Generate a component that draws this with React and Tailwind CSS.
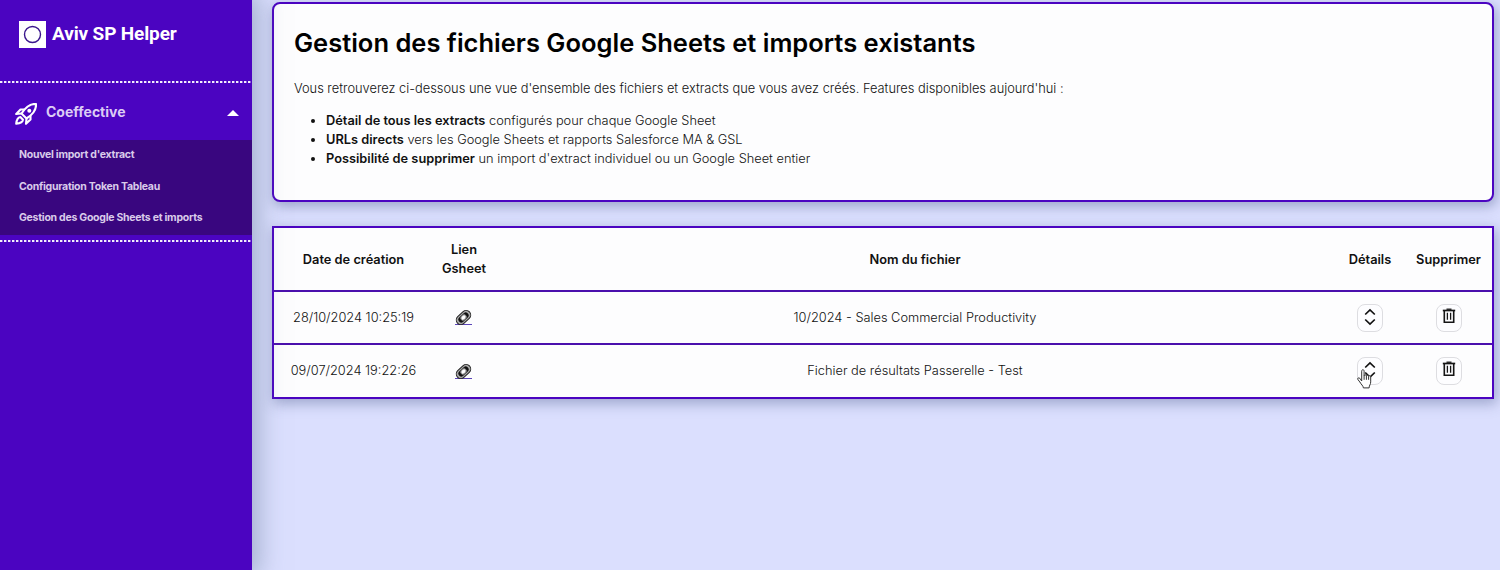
import React from "react";

const menu = ["Nouvel import d'extract", "Configuration Token Tableau", "Gestion des Google Sheets et imports"];

const rows = [
  { date: "28/10/2024 10:25:19", name: "10/2024 - Sales Commercial Productivity" },
  { date: "09/07/2024 19:22:26", name: "Fichier de résultats Passerelle - Test", hovered: true },
];

function DottedLine() {
  return (
    <svg className="block h-[2px] w-full shrink-0" aria-hidden="true">
      <line x1="0" y1="1" x2="252" y2="1" stroke="#f4effc" strokeWidth="2" strokeDasharray="2.4 1.6" />
    </svg>
  );
}

function RocketIcon() {
  return (
    <svg viewBox="0 0 22 22" className="ml-[2px] mt-[4px] h-[22px] w-[22px]" fill="none" stroke="#fff" strokeWidth="2.1" strokeLinejoin="round">
      <path d="M21 1C15 .5 11 3.500 6.500 10.500l5 5C18.500 11 21.500 7 21 1Z" />
      <path d="M9.200 6.500H5.500L1.200 11l5.300-.5M15.500 12.800v3.700L11 20.800l.5-5.300" />
      <path d="M5.300 14C2.300 14.400 1.600 17 1.200 20.800 5 20.400 7.600 19.700 8 16.700Z" />
      <circle cx="14.300" cy="7.700" r="2" fill="#fff" stroke="none" />
    </svg>
  );
}

function LinkIcon() {
  return (
    <a className="mr-[1px] mt-[-1px] inline-flex h-[16px] w-[17px] border-b border-[#5b45b8]">
      <svg viewBox="0 0 17 17" className="h-[17px] w-[17px] shrink-0" fill="none">
        <g transform="rotate(-43 8.5 8.5)">
          <rect x="0.3" y="4" width="16.4" height="9" rx="4.500" fill="#aaa" stroke="#222" strokeWidth="1" />
          <rect x="2.800" y="5.800" width="11.400" height="5.400" rx="2.700" fill="#111" stroke="#111" strokeWidth="0.500" />
          <ellipse cx="8.500" cy="8.500" rx="2.900" ry="2.200" fill="#fff" stroke="#888" strokeWidth="1" />
        </g>
      </svg>
    </a>
  );
}

function ChevronsIcon() {
  return (
    <svg viewBox="0 0 12 18" className="h-[18px] w-[12px]" fill="none" stroke="#111" strokeWidth="1.7">
      <path d="M1.200 6.500 6 2l4.800 4.500M1.200 11.500 6 16l4.800-4.500" />
    </svg>
  );
}

function TrashIcon() {
  return (
    <svg viewBox="0 0 14 16" className="h-[16px] w-[14px]" fill="none" stroke="#151515">
      <path d="M0.800 2.500h12.400" strokeWidth="1.700" />
      <path d="M4.500 1.200h5" strokeWidth="1.300" />
      <path d="M2.300 2.800v11.400h9.400V2.800" strokeWidth="1.600" />
      <path d="M5.400 4.800v7M8.600 4.800v7" strokeWidth="1.300" />
    </svg>
  );
}

function HandCursor() {
  return (
    <svg viewBox="0 0 16 20" className="absolute left-[-1px] top-[11px] h-[20px] w-[16px]" fill="#fff" stroke="#333" strokeWidth="1" strokeLinejoin="round">
      <path d="M4.700 12V2.200c0-2 2.400-2 2.400 0v4.600c.2-1.500 2.200-1.300 2.300.2.300-1.200 2.100-1 2.200.4.400-1 2.100-.7 2.100.7v4.800c0 2.700-1.500 3.200-1.600 6H6.400c-.2-2.200-2.200-3.300-3.600-6L1 10.700c-1-1.600.8-2.500 1.800-1.400z" />
      <path d="M7.100 6.800v4M9.400 7v3.800M11.600 7.400v3.400" />
    </svg>
  );
}

function IconButton({ children }) {
  return (
    <button className="relative flex h-[28px] w-[26px] justify-center rounded-[8px] border border-[#dddde1] bg-[#fdfdff]">
      {children}
    </button>
  );
}

const grid = "grid grid-cols-[159px_62px_840px_70px_87px] items-center justify-items-center";

export default function App() {
  return (
    <div className="flex h-[570px] w-[1500px] overflow-hidden bg-[#dbdffe] font-['Inter',sans-serif] text-[#111]">
      <aside className="z-10 flex w-[252px] shrink-0 flex-col bg-[#4b04c1] shadow-[1px_0_24px_6px_rgba(110,130,160,0.5)]">
        <div className="flex h-[81px] shrink-0 items-start gap-[6px] pl-[19px] pt-[21px]">
          <svg viewBox="0 0 27 27" className="h-[27px] w-[27px]">
            <path d="M0 0h27v27H0z" fill="#fff" />
            <circle cx="13.500" cy="13.500" r="8" fill="none" stroke="#3a168d" strokeWidth="1.400" />
          </svg>
          <span className="whitespace-nowrap font-['Roboto',sans-serif] text-[19px] font-bold leading-[25px] tracking-[-0.14px] text-white">Aviv SP Helper</span>
        </div>
        <DottedLine />
        <div className="flex h-[57px] shrink-0 items-center pl-[13px] pr-[13px]">
          <RocketIcon />
          <span className="ml-[9px] mt-[1px] text-[14px] font-bold leading-[20px] text-[#dcccf5]">Coeffective</span>
          <svg viewBox="0 0 12 6" className="ml-auto mt-[2px] h-[6px] w-[12px]" fill="#fff">
            <path d="M6 0 12 6H0z" />
          </svg>
        </div>
        <nav className="flex h-[95px] shrink-0 flex-col bg-[#39067f]">
          {menu.map((label) => (
            <a key={label} className="flex h-[31.500px] items-center whitespace-nowrap pb-[1px] pl-[19px] text-[10.500px] font-bold tracking-[-0.260px] text-[#d9cbea]">{label}</a>
          ))}
        </nav>
        <div className="mt-[5px] shrink-0">
          <DottedLine />
        </div>
      </aside>

      <main className="flex flex-col gap-[24px] pl-[20px] pt-[2px]">
        <section className="h-[200px] w-[1222px] rounded-[8px] border-2 border-[#4b04c1] bg-[#fdfdfe] pl-[20px] shadow-[2px_4px_12px_1px_rgba(90,105,150,0.45)]">
          <h1 className="mt-[23px] whitespace-nowrap text-[25.500px] font-semibold leading-[32px] text-black">Gestion des fichiers Google Sheets et imports existants</h1>
          <p className="mt-[20px] whitespace-nowrap text-[12.830px] font-light leading-[19px]">
            Vous retrouverez ci-dessous une vue d'ensemble des fichiers et extracts que vous avez créés. Features disponibles aujourd'hui :
          </p>
          <ul className="mt-[13px] list-disc pl-[32px] text-[12.800px] font-light leading-[19px]">
            <li><b className="font-semibold">Détail de tous les extracts</b> configurés pour chaque Google Sheet</li>
            <li><b className="font-semibold">URLs directs</b> vers les Google Sheets et rapports Salesforce MA &amp; GSL</li>
            <li><b className="font-semibold">Possibilité de supprimer</b> un import d'extract individuel ou un Google Sheet entier</li>
          </ul>
        </section>

        <section className="w-[1222px] border-2 border-[#4b04c1] bg-[#fdfdfe] text-[12.800px] shadow-[2px_4px_12px_1px_rgba(90,105,150,0.45)]">
          <div className={`${grid} h-[62px] text-center font-semibold leading-[19px]`}>
            <span>Date de création</span>
            <span>Lien<br />Gsheet</span>
            <span>Nom du fichier</span>
            <span>Détails</span>
            <span>Supprimer</span>
          </div>
          {rows.map((row) => (
            <div key={row.date} className={`${grid} h-[53.400px] border-t-2 border-[#4b10ad] font-light`}>
              <span>{row.date}</span>
              <LinkIcon />
              <span>{row.name}</span>
              <IconButton>
                <span className="mt-[3px]"><ChevronsIcon /></span>
                {row.hovered && <HandCursor />}
              </IconButton>
              <IconButton>
                <span className="mt-[3px]"><TrashIcon /></span>
              </IconButton>
            </div>
          ))}
        </section>
      </main>
    </div>
  );
}
